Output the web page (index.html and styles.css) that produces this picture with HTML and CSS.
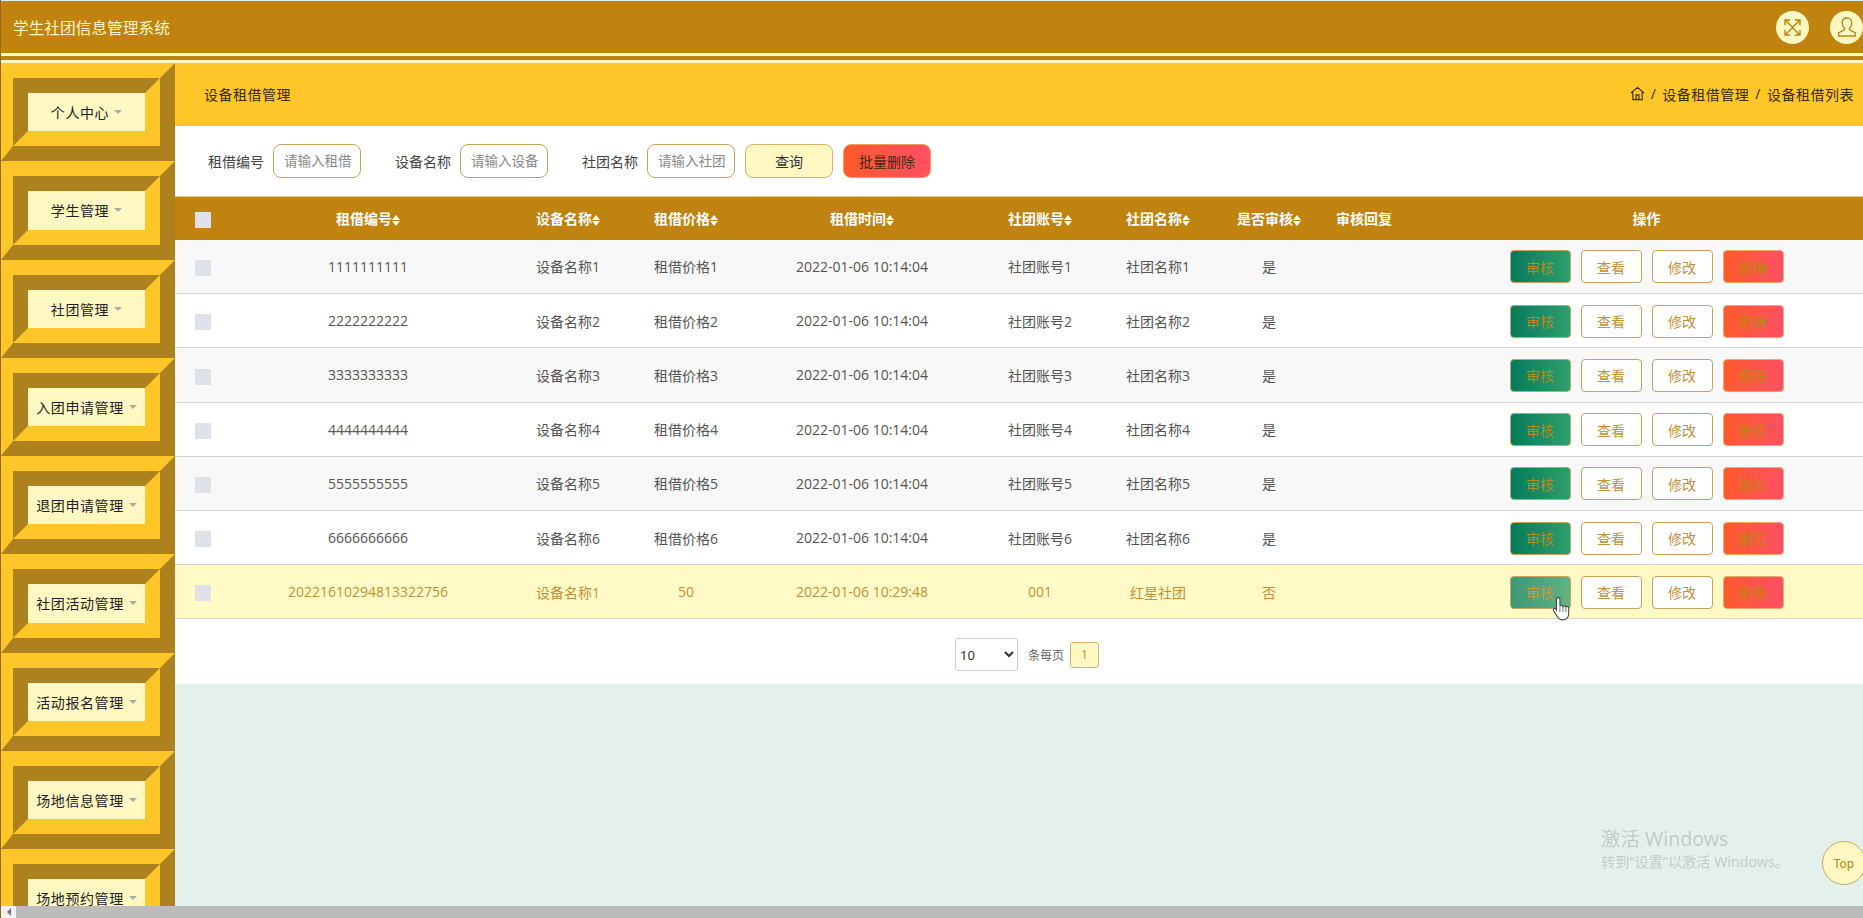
FILE: index.html
```html
<!DOCTYPE html>
<html lang="zh-CN">
<head>
<meta charset="utf-8">
<title>学生社团信息管理系统</title>
<link rel="stylesheet" href="styles.css">
</head>
<body>
<div class="app">
  <header class="topbar">
    <div class="brand">学生社团信息管理系统</div>
    <div class="top-actions">
      <span class="round-icon">
        <svg viewBox="0 0 20 20" width="23" height="23" fill="none" stroke="#c0830f" stroke-width="1.200"><path d="M4 4l12 12M16 4L4 16M3.500 8V3.500H8M12 3.500h4.500V8M16.500 12v4.500H12M8 16.500H3.500V12"/></svg>
      </span>
      <span class="round-icon">
        <svg viewBox="0 0 20 20" width="24" height="24" fill="none" stroke="#c0830f" stroke-width="1.100"><path d="M10 2.500c-2.500 0-4 1.800-4 4.200 0 2 .9 3.500 2 4.300v1.200L3 15v2.500h14V15l-5-2.800V11c1.100-.8 2-2.300 2-4.300 0-2.400-1.500-4.200-4-4.200z"/></svg>
      </span>
    </div>
  </header>
  <div class="body">
    <nav class="side">
      <div class="nav-item"><div class="nav-bevel"><a class="nav-link">个人中心<i class="caret"></i></a></div></div>
      <div class="nav-item"><div class="nav-bevel"><a class="nav-link">学生管理<i class="caret"></i></a></div></div>
      <div class="nav-item"><div class="nav-bevel"><a class="nav-link">社团管理<i class="caret"></i></a></div></div>
      <div class="nav-item"><div class="nav-bevel"><a class="nav-link">入团申请管理<i class="caret"></i></a></div></div>
      <div class="nav-item"><div class="nav-bevel"><a class="nav-link">退团申请管理<i class="caret"></i></a></div></div>
      <div class="nav-item"><div class="nav-bevel"><a class="nav-link">社团活动管理<i class="caret"></i></a></div></div>
      <div class="nav-item"><div class="nav-bevel"><a class="nav-link">活动报名管理<i class="caret"></i></a></div></div>
      <div class="nav-item"><div class="nav-bevel"><a class="nav-link">场地信息管理<i class="caret"></i></a></div></div>
      <div class="nav-item"><div class="nav-bevel"><a class="nav-link">场地预约管理<i class="caret"></i></a></div></div>
    </nav>
    <main class="main">
      <div class="crumbs">
        <div class="crumb-title">设备租借管理</div>
        <div class="crumb-path">
          <svg class="home" viewBox="0 0 16 16" width="15" height="15" fill="none" stroke="#3a2a05" stroke-width="1.200"><path d="M1 7.500L8 1.500l7 6M3 6.500V14.500h10V6.500M6.500 14.500V9.500h3v5"/></svg>
          <span>/</span><span>设备租借管理</span><span>/</span><span>设备租借列表</span>
        </div>
      </div>
      <form class="filters">
        <label class="f-label">租借编号</label><input class="f-input" placeholder="请输入租借编号">
        <label class="f-label f-gap">设备名称</label><input class="f-input" placeholder="请输入设备名称">
        <label class="f-label f-gap">社团名称</label><input class="f-input" placeholder="请输入社团名称">
        <button type="button" class="f-btn f-query">查询</button>
        <button type="button" class="f-btn f-del">批量删除</button>
      </form>
      <div class="table-wrap">
        <table class="grid">
          <colgroup>
            <col class="c0"><col class="c1"><col class="c2"><col class="c3"><col class="c4"><col class="c5"><col class="c6"><col class="c7"><col class="c8"><col class="c9">
          </colgroup>
          <thead>
            <tr>
              <th><span class="cb"></span></th>
              <th>租借编号<i class="sort"></i></th>
              <th>设备名称<i class="sort"></i></th>
              <th>租借价格<i class="sort"></i></th>
              <th>租借时间<i class="sort"></i></th>
              <th>社团账号<i class="sort"></i></th>
              <th>社团名称<i class="sort"></i></th>
              <th>是否审核<i class="sort"></i></th>
              <th>审核回复</th>
              <th>操作</th>
            </tr>
          </thead>
          <tbody>
            <tr><td><span class="cb"></span></td><td>1111111111</td><td>设备名称1</td><td>租借价格1</td><td>2022-01-06 10:14:04</td><td>社团账号1</td><td>社团名称1</td><td>是</td><td></td><td><div class="ops"><button class="op op-audit">审核</button><button class="op">查看</button><button class="op">修改</button><button class="op op-del">删除</button></div></td></tr>
            <tr><td><span class="cb"></span></td><td>2222222222</td><td>设备名称2</td><td>租借价格2</td><td>2022-01-06 10:14:04</td><td>社团账号2</td><td>社团名称2</td><td>是</td><td></td><td><div class="ops"><button class="op op-audit">审核</button><button class="op">查看</button><button class="op">修改</button><button class="op op-del">删除</button></div></td></tr>
            <tr><td><span class="cb"></span></td><td>3333333333</td><td>设备名称3</td><td>租借价格3</td><td>2022-01-06 10:14:04</td><td>社团账号3</td><td>社团名称3</td><td>是</td><td></td><td><div class="ops"><button class="op op-audit">审核</button><button class="op">查看</button><button class="op">修改</button><button class="op op-del">删除</button></div></td></tr>
            <tr><td><span class="cb"></span></td><td>4444444444</td><td>设备名称4</td><td>租借价格4</td><td>2022-01-06 10:14:04</td><td>社团账号4</td><td>社团名称4</td><td>是</td><td></td><td><div class="ops"><button class="op op-audit">审核</button><button class="op">查看</button><button class="op">修改</button><button class="op op-del">删除</button></div></td></tr>
            <tr><td><span class="cb"></span></td><td>5555555555</td><td>设备名称5</td><td>租借价格5</td><td>2022-01-06 10:14:04</td><td>社团账号5</td><td>社团名称5</td><td>是</td><td></td><td><div class="ops"><button class="op op-audit">审核</button><button class="op">查看</button><button class="op">修改</button><button class="op op-del">删除</button></div></td></tr>
            <tr><td><span class="cb"></span></td><td>6666666666</td><td>设备名称6</td><td>租借价格6</td><td>2022-01-06 10:14:04</td><td>社团账号6</td><td>社团名称6</td><td>是</td><td></td><td><div class="ops"><button class="op op-audit">审核</button><button class="op">查看</button><button class="op">修改</button><button class="op op-del">删除</button></div></td></tr>
            <tr class="hover"><td><span class="cb"></span></td><td>20221610294813322756</td><td>设备名称1</td><td>50</td><td>2022-01-06 10:29:48</td><td>001</td><td>红星社团</td><td>否</td><td></td><td><div class="ops"><button class="op op-audit">审核</button><button class="op">查看</button><button class="op">修改</button><button class="op op-del">删除</button></div></td></tr>
          </tbody>
        </table>
      </div>
      <div class="pager">
        <select class="page-size"><option>10</option></select>
        <span class="page-text">条每页</span>
        <span class="page-num">1</span>
      </div>
    </main>
  </div>
  <div class="hscroll"><span class="hscroll-btn"><i class="hscroll-arrow"></i></span><span class="hscroll-thumb"></span></div>
</div>

<svg class="cursor" viewBox="0 0 18 23" width="20" height="25"><path d="M5.500 1.500c1 0 1.600.7 1.600 1.700v6.300c.3-.9 2.500-1 2.800.2.500-.9 2.400-.8 2.700.4.600-.7 2.500-.5 2.600 1.100v4.600c0 3-1.700 6.200-5.300 6.200-2.800 0-4-.9-5.300-3.200L1.300 13.500c-.8-1.500 1-2.800 2.200-1.500l.4.700V3.200c0-1 .6-1.700 1.600-1.700z" fill="#fff" stroke="#444" stroke-width="1"/><path d="M7.100 10v5M9.900 10v5M12.600 10.500V15" stroke="#666" stroke-width=".8" fill="none"/></svg>

<div class="watermark">
  <div class="wm-big">激活 Windows</div>
  <div class="wm-small">转到“设置”以激活 Windows。</div>
</div>
<a class="to-top">Top</a>
</body>
</html>
```
FILE: styles.css
```css
* { box-sizing: border-box; }
html, body { margin: 0; height: 100%; overflow: hidden; }
body {
  font-family: "Open Sans", "Noto Sans CJK SC", "Liberation Sans", sans-serif;
  font-size: 14px;
  color: #555;
  background: #e4f0eb;
}
.app {
  height: 100vh;
  display: flex;
  flex-direction: column;
  padding-top: 1px;
  border-left: 1px solid #8f6b12;
}
.topbar {
  flex: none;
  height: 62px;
  border-bottom: 10px double #fff8c3;
  background: #c0830f;
  display: flex;
  align-items: center;
  justify-content: space-between;
  padding-left: 12px;
}
.brand { color: #fff6c8; font-size: 15.700px; }
.top-actions { display: flex; gap: 21px; }
.round-icon {
  width: 33px;
  height: 33px;
  border-radius: 50%;
  background: #fff8c3;
  display: flex;
  align-items: center;
  justify-content: center;
}
.body { flex: 1; min-height: 0; display: flex; overflow: hidden; }

/* sidebar */
.side { flex: none; width: 174px; overflow: hidden; }
.nav-item {
  height: 98.280px;
  border: 15px solid;
  border-color: #ffc62a #ad811e #ad811e #ffc62a;
  border-left-width: 12px;
}
.nav-bevel {
  height: 100%;
  border: 15px solid;
  border-color: #ad811e #ffc62a #ffc62a #ad811e;
}
.nav-link {
  height: 100%;
  background: #fff8c3;
  color: #222;
  display: flex;
  align-items: center;
  justify-content: center;
  letter-spacing: .6px;
  white-space: nowrap;
}
.caret {
  margin-left: 5px;
  width: 0;
  height: 0;
  border: 4px solid transparent;
  border-top: 4px solid #aaa;
  border-bottom: 0;
}

/* main */
.main { flex: 1; min-width: 0; display: flex; flex-direction: column; overflow: hidden; }
.crumbs {
  flex: none;
  height: 63px;
  background: #ffc62a;
  display: flex;
  align-items: center;
  justify-content: space-between;
  padding: 0 9px 2px 29px;
  color: #3a2a05;
  letter-spacing: .5px;
}
.crumb-path { display: flex; align-items: center; gap: 6px; }
.home { display: block; }
.filters {
  flex: none;
  height: 70px;
  background: #fff;
  display: flex;
  align-items: center;
  padding-left: 33px;
  color: #444;
}
.f-label { width: 65px; flex: none; white-space: nowrap; }
.f-gap { margin-left: 34px; }
.f-input {
  width: 88px;
  height: 34px;
  border: 1px solid #c9a35c;
  border-radius: 8px;
  background: #fff;
  padding: 0 8px 0 10px;
  font: inherit;
  font-size: 13.500px;
  outline: none;
}
.f-input::placeholder { color: #8a8a8a; opacity: 1; }
.f-btn {
  height: 34px;
  width: 88px;
  border: 1px solid #d8b46a;
  border-radius: 8px;
  font: inherit;
  color: #333;
  margin-left: 10px;
  padding: 0;
}
.f-query { background: #fff8c3; }
.f-del { background: linear-gradient(90deg, #ff5a2c, #ff5064); border-color: #f0a050; color: #4a2410; }

/* table */
.table-wrap { flex: none; overflow: hidden; background: #fff; }
.grid { width: 1709px; table-layout: fixed; border-collapse: collapse; }
.c0 { width: 56px; }
.c1 { width: 274px; }
.c2 { width: 126px; }
.c3 { width: 110px; }
.c4 { width: 242px; }
.c5 { width: 114px; }
.c6 { width: 122px; }
.c7 { width: 100px; }
.c8 { width: 90px; }
.c9 { width: 475px; }
.grid th {
  height: 43px;
  background: #c0830f;
  color: #fff;
  font-weight: 700;
  text-align: center;
  padding: 0;
  border-top: 1px solid #e3c98a;
}
.grid td {
  height: 54.200px;
  text-align: center;
  padding: 0;
  border-bottom: 1px solid #d5d5d5;
}
.grid tbody tr:nth-child(odd) { background: #f8f8f8; }
.grid tbody tr.hover { background: #fffac6; color: #c2913a; }
.cb {
  display: inline-block;
  vertical-align: middle;
  width: 16px;
  height: 16px;
  background: #dfe2e8;
}
.sort {
  display: inline-flex;
  flex-direction: column;
  gap: 1px;
  vertical-align: middle;
}
.sort::before, .sort::after {
  content: "";
  width: 0;
  height: 0;
  border-left: 4.500px solid transparent;
  border-right: 4.500px solid transparent;
}
.sort::before { border-bottom: 5px solid #fff; }
.sort::after { border-top: 5px solid #fff; }
.ops { display: flex; justify-content: center; gap: 10px; padding-top: 1px; }
.op {
  width: 61px;
  height: 33px;
  border: 1px solid #c9a35c;
  border-radius: 4px;
  background: #fff;
  color: #c2913a;
  font: inherit;
  padding: 0;
}
.op-audit { background: linear-gradient(90deg, #067a5c, #2f9f6c); color: #b58a24; }
.op-del { background: linear-gradient(90deg, #ff5a2c, #ff5064); color: #c0830f; border-color: #f0a868; }
.hover .op-audit { background: linear-gradient(90deg, #3c9878, #62b283); color: #c89a3c; }

/* pager */
.pager {
  flex: none;
  height: 65px;
  background: #fff;
  display: flex;
  align-items: center;
  padding: 6px 0 0 780px;
}
.page-size {
  width: 63px;
  height: 33px;
  border: 1px solid #ccc;
  border-radius: 3px;
  background: #fff;
  color: #333;
  font: 13px "Noto Sans", sans-serif;
}
.page-text { margin-left: 10px; font-size: 12px; color: #666; }
.page-num {
  margin-left: 6px;
  width: 29px;
  height: 26px;
  border: 1px solid #d8b46a;
  border-radius: 3px;
  background: #fff8c3;
  color: #c2913a;
  font-size: 12px;
  display: flex;
  align-items: center;
  justify-content: center;
}

/* scrollbar */
.hscroll { flex: none; height: 12px; display: flex; background: #bcbcbc; }
.hscroll-btn {
  width: 15px;
  background: #f1f1f1;
  display: flex;
  align-items: center;
  justify-content: center;
}
.hscroll-arrow {
  width: 0;
  height: 0;
  border: 4px solid transparent;
  border-right: 4px solid #777;
  border-left: 0;
}
.hscroll-thumb { flex: 1; background: #bcbcbc; }

/* overlays */
.cursor { position: fixed; left: 1552px; top: 596px; }
.watermark { position: fixed; left: 1601px; top: 825px; color: #c2cac6; font-family: "Noto Sans", "Noto Sans CJK SC", sans-serif; }
.wm-big { font-size: 19.500px; line-height: 27px; }
.wm-small { font-size: 14.200px; line-height: 20px; }
.to-top {
  position: fixed;
  left: 1822px;
  top: 841px;
  width: 44px;
  height: 44px;
  border-radius: 50%;
  border: 1px solid #d0a850;
  background: #fff8c3;
  color: #c0830f;
  font: 12px "Noto Sans", sans-serif;
  display: flex;
  align-items: center;
  justify-content: center;
}
```
